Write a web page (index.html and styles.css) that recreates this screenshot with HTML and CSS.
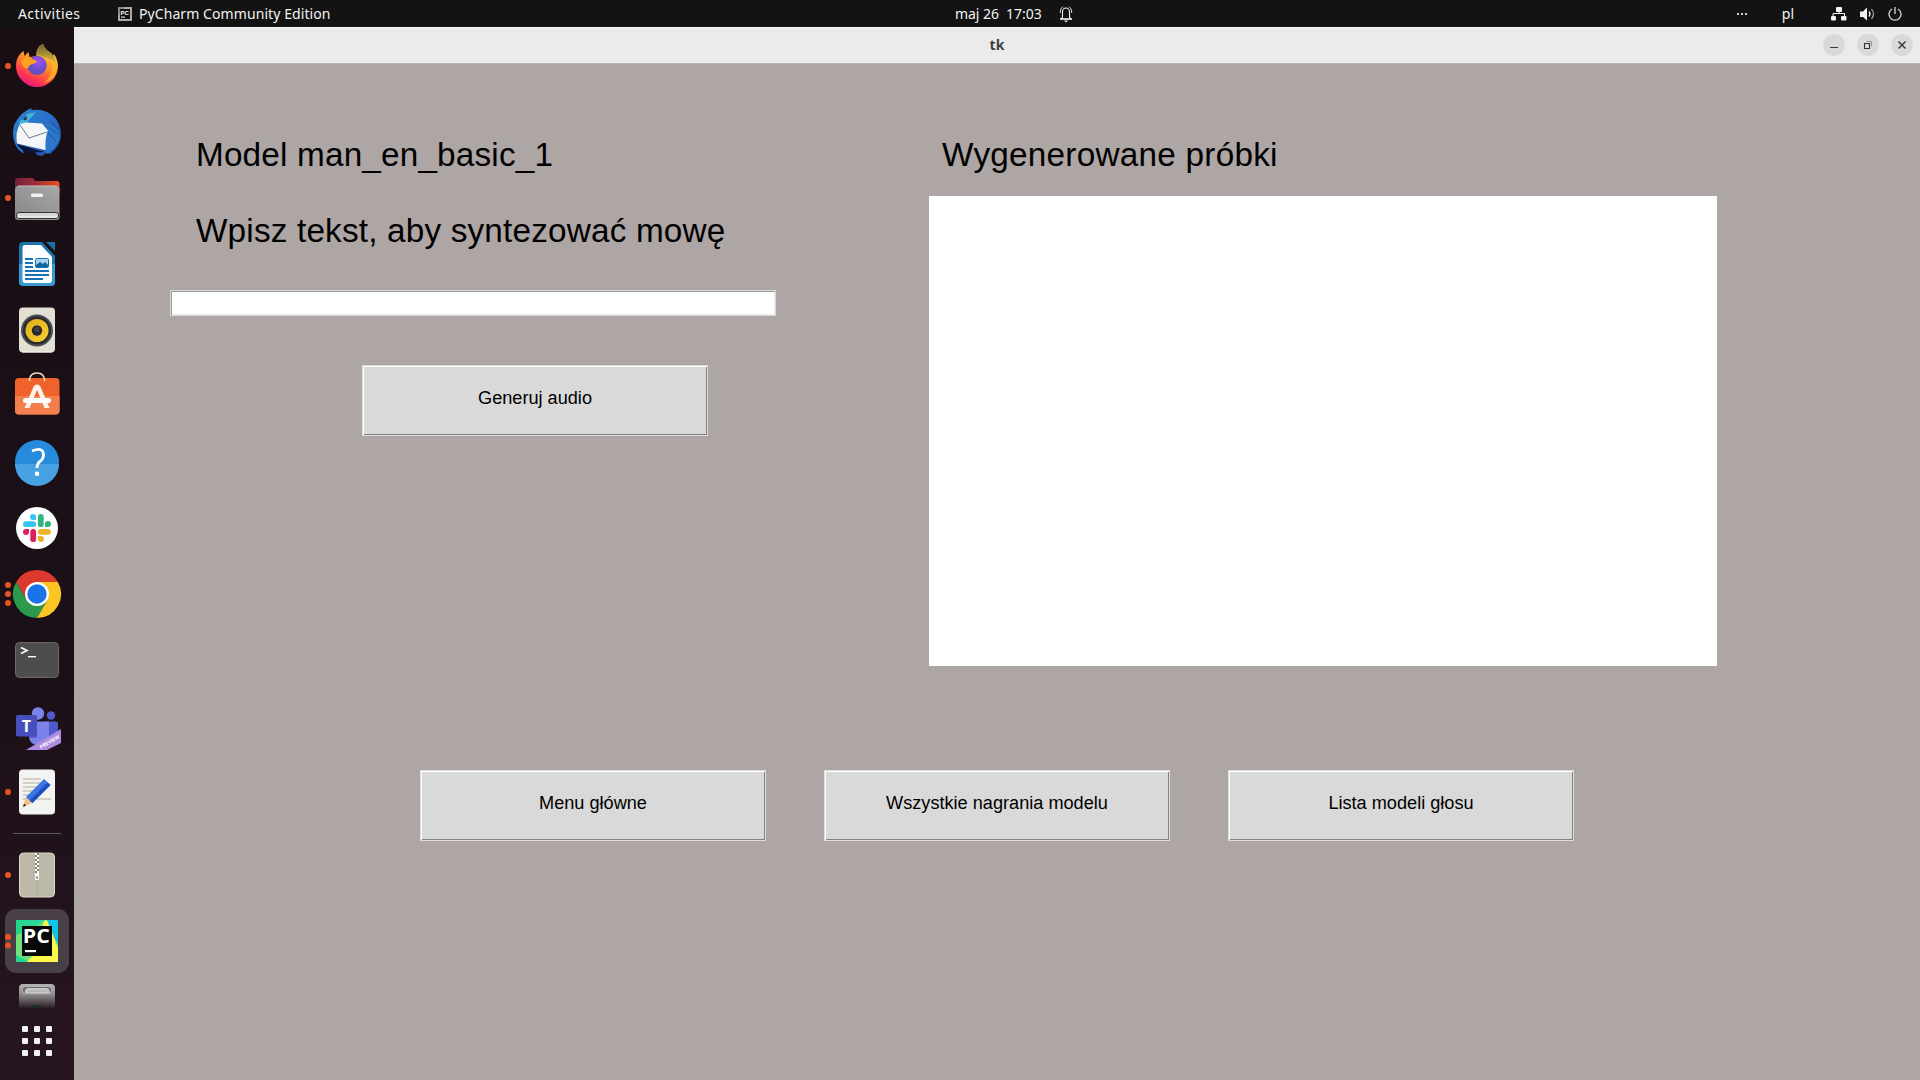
FILE: index.html
```html
<!DOCTYPE html>
<html lang="pl">
<head>
<meta charset="utf-8">
<title>tk</title>
<link rel="stylesheet" href="styles.css">
</head>
<body>
<div class="desktop">
  <header class="topbar">
    <div class="top-left">
      <span class="activities">Activities</span>
      <svg class="app-icon" width="14" height="14" viewBox="0 0 14 14"><path d="M0 0h14v14H0z" fill="#aaa"/><path d="M0 0h7L0 9z" fill="#888"/><path d="M2 2h10v10H2z" fill="#111"/><text x="2.6" y="7.6" class="pc-mini">PC</text><path d="M3 9.6h4v1H3z" fill="#fff"/></svg>
      <span class="app-name">PyCharm Community Edition</span>
    </div>
    <div class="top-center">
      <span class="clock">maj 26&nbsp; 17:03</span>
      <svg class="bell" width="14" height="18" viewBox="0 0 14 18" fill="none" stroke="#f2f2f2"><path d="M3.5 12V7a3.5 4 0 0 1 7 0v5l1.6 2H1.9z" stroke-width="1.1"/><path d="M1 14h12" stroke-width="1.3"/><path d="M5 15.5h4l-2 2z" fill="#f2f2f2" stroke="none"/><path d="M1.2 8Q1.2 3 4 1.6M12.8 8Q12.8 3 10 1.6" stroke-width=".9"/></svg>
    </div>
    <div class="top-right">
      <svg width="12" height="4" viewBox="0 0 12 4" fill="#cfcfcf"><path d="M1 1h2v2H1zM5 1h2v2H5zM9 1h2v2H9z"/></svg>
      <span class="lang">pl</span>
      <svg class="net" width="16" height="14" viewBox="0 0 16 14" fill="#f2f2f2"><rect x="5" y="0" width="6" height="5" rx="1"/><rect x="0" y="9" width="5" height="4.5" rx="1"/><rect x="10" y="9" width="5.5" height="4.5" rx="1"/><path d="M2 9V6.5h11.500V9M8 4v3" fill="none" stroke="#f2f2f2"/></svg>
      <svg class="vol" width="15" height="14" viewBox="0 0 15 14"><path d="M0 4.500h3L7 .5v13L3 10H0z" fill="#f2f2f2"/><path d="M9 4.500q2 2.500 0 5" fill="none" stroke="#f2f2f2" stroke-width="1.300"/><path d="M11.500 2q4 5 0 10" fill="none" stroke="#aaa" stroke-width="1.200"/></svg>
      <svg class="power" width="14" height="14" viewBox="0 0 14 14" fill="none" stroke="#d8d8d8" stroke-width="1.300"><path d="M4 2a6 6 0 1 0 6 0M7 0v7"/></svg>
    </div>
  </header>

  <nav class="dock">
    <svg class="dock-item" viewBox="0 0 74 66">
      <defs>
        <linearGradient id="fx" x1=".8" y1="0" x2=".3" y2="1"><stop offset="0" stop-color="#ffe23f"/><stop offset=".45" stop-color="#ff9422"/><stop offset=".8" stop-color="#ff3750"/><stop offset="1" stop-color="#e5128b"/></linearGradient>
        <linearGradient id="fxt" x1="0" y1="0" x2="0" y2="1"><stop offset="0" stop-color="#6b6134"/><stop offset="1" stop-color="#e8bd3c"/></linearGradient>
        <radialGradient id="fxg" cx=".6" cy=".3"><stop offset="0" stop-color="#a24cf5"/><stop offset="1" stop-color="#6350c4"/></radialGradient>
      </defs>
      <circle cx="8" cy="33" r="3" class="dot"/>
      <path d="M16 33C16 26 19 21 23.500 18l1 5 4-4 1 5q3 0 7-1.500Q36 14 43 11q2 6 8 9l2 3 1-2q4 6 4 12a21 21 0 0 1-42 0z" fill="url(#fx)"/>
      <path d="M36.500 22Q36 14 43 11q2 6 8 9 5 5 5 11-10-8-19.500-9z" fill="url(#fxt)"/>
      <circle cx="37" cy="32.500" r="9.700" fill="url(#fxg)"/>
      <path d="M21 28q5-4 9-3l7 3q-1 2.500-5 3-3 1-4 4-5 2-7-7z" fill="#ffa01f"/>
      <path d="M44 24q10 3 8 14-2 8-9 12 12-2 14-15-2-9-13-11z" fill="#ffb52e" opacity=".8"/>
    </svg>
    <svg class="dock-item" viewBox="0 0 74 66">
      <defs><linearGradient id="tb" x1="0" y1="0" x2="1" y2="1"><stop offset="0" stop-color="#2e83cc"/><stop offset=".5" stop-color="#2a71c9"/><stop offset="1" stop-color="#1f459c"/></linearGradient></defs>
      <path d="M14 26q7-14 18-17l-1 2q16-2 25 9 7 10 4 22-3 8-8 11l-1 2-5-1-4 3-5-1-2-3-12-3q0 4 2 5-12-5-12-22z" fill="url(#tb)"/>
      <path d="M19 22q5-1 8-7l9-2-8 9-7 7z" fill="#48b3d9"/>
      <path d="M17 45l27 8-18 1-8-7z" fill="#0d1236"/>
      <path d="M20 25l6-1.500 16 1 6 7-1 20-30-7q-2-11 3-19.500z" fill="#f4f5f7"/>
      <path d="M20 26l9 13 18-6" fill="none" stroke="#777c84" stroke-width="1"/>
      <path d="M38 24q8-1 10 7-4 10-2 24 9-3 14-16 1-15-22-15z" fill="#2b78cb"/>
      <path d="M51 22l7 9M49 28l10 8M48 34l8 8" stroke="#1e4fa8" fill="none"/>
      <path d="M23 20q4 4 4-3z" fill="#183765"/>
    </svg>
    <svg class="dock-item" viewBox="0 0 74 66">
      <defs><linearGradient id="fo" x1="0" x2="1"><stop offset="0" stop-color="#6f2140"/><stop offset=".5" stop-color="#a62f36"/><stop offset="1" stop-color="#e95420"/></linearGradient><linearGradient id="fg" x1="0" y1="1" x2="1" y2="0"><stop offset="0" stop-color="#858585"/><stop offset="1" stop-color="#a8a8a8"/></linearGradient></defs>
      <circle cx="8" cy="33" r="3" class="dot"/>
      <path d="M15 28V16q0-3 3-3h14q1.500 0 3 3h22q2.500 0 2.500 3v9z" fill="url(#fo)"/>
      <path d="M15 25q0-4 3-4h38.500q3 0 3 4v27q0 3-3 3H18q-3 0-3-3z" fill="url(#fg)"/>
      <path d="M18 21h38.500" stroke="#c4c4c4" fill="none"/>
      <rect x="31" y="28.500" width="12" height="3.500" rx="1.500" fill="#f2f2f2"/>
      <rect x="16.500" y="47.500" width="42" height="6" rx="2.500" fill="#d6d6d6" stroke="#333"/><path d="M18 52h39" stroke="#f7f7f7"/>
    </svg>
    <svg class="dock-item" viewBox="0 0 74 66">
      <path d="M23 11h19l13 14v26q0 4-4 4H23q-4 0-4-4V15q0-4 4-4z" fill="#1a76ad"/>
      <path d="M19 33h36v18q0 4-4 4H23q-4 0-4-4z" fill="#3899d0"/>
      <path d="M46 11h9v9z" fill="#1a6fa4"/>
      <path d="M25 14h16l11 12v23q0 3-3 3H25q-2.500 0-2.500-3V17q0-3 2.500-3z" fill="#fbfdff"/>
      <path d="M25 28h8M25 32h8M25 36h8M25 40h24M25 44h24M25 48h18" stroke="#1673b1" stroke-width="2"/>
      <rect x="35.500" y="27.500" width="13" height="9" rx="1" fill="#a5d3ef" stroke="#1673b1"/><path d="M36 36v-2l4-3 3 2 2-2 3 3v2z" fill="#0b659e"/>
    </svg>
    <svg class="dock-item" viewBox="0 0 74 66">
      <defs><linearGradient id="sp" x1="0" y1="0" x2="1" y2="1"><stop offset="0" stop-color="#dfae18"/><stop offset="1" stop-color="#f8cf35"/></linearGradient></defs>
      <rect x="19" y="10.500" width="36" height="45" rx="4" fill="#e2dfd3"/><path d="M22 55h30" stroke="#f6f4ed"/>
      <circle cx="37" cy="33.500" r="16" fill="#4b4d53"/><circle cx="37" cy="33.500" r="14" fill="#292b31"/><circle cx="37" cy="33.500" r="11.500" fill="url(#sp)"/><circle cx="37" cy="33.500" r="5.200" fill="#292929"/><circle cx="37" cy="32.500" r="2.500" fill="#444"/>
    </svg>
    <svg class="dock-item" viewBox="0 0 74 66">
      <path d="M29.500 18q0-8 7.500-8t7.500 8" fill="none" stroke="#f5d9ae" stroke-width="1.600"/>
      <rect x="15" y="15" width="44.500" height="36.500" rx="4" fill="#f0622b"/><path d="M15 33h44.500v14.500q0 4-4 4H19q-4 0-4-4z" fill="#f37f4f"/>
      <path d="M29.500 15v3M44.500 15v3" stroke="#f5d9ae" stroke-width="1.600"/>
      <path d="M24.500 45l8.500-20q1-3.500 4-3.500t4 3.500l8.500 20h-5L37 27l-7.500 18z" fill="#fff3ea"/><rect x="23" y="35" width="28" height="5" rx="2.500" fill="#fff"/>
    </svg>
    <svg class="dock-item" viewBox="0 0 74 66">
      <circle cx="37" cy="33" r="22" fill="#258bda"/><path d="M15 35a22 22 0 0 0 44 0z" fill="#47a2e4"/>
      <path d="M32 22Q43.500 17.500 43.500 26q0 3.500-3 6-3.500 2.500-3.500 7" fill="none" stroke="#fff" stroke-width="2.800"/><circle cx="37" cy="44.700" r="2.300" fill="#fff"/>
    </svg>
    <svg class="dock-item" viewBox="0 0 74 66">
      <circle cx="37" cy="33" r="21" fill="#fff"/>
      <path d="M26 29.200h7.200" stroke="#36c5f0" stroke-width="5.800" stroke-linecap="round"/><path d="M36 25h-3a3 3 0 1 1 3-3z" fill="#36c5f0"/>
      <path d="M40.800 22v7.200" stroke="#2eb67d" stroke-width="5.800" stroke-linecap="round"/><path d="M45 32v-3a3 3 0 1 1 3 3z" fill="#2eb67d"/>
      <path d="M33.200 37v7.200" stroke="#e01e5a" stroke-width="5.800" stroke-linecap="round"/><path d="M29 34v3a3 3 0 1 1-3-3z" fill="#e01e5a"/>
      <path d="M40.800 36.800H48" stroke="#ecb22e" stroke-width="5.800" stroke-linecap="round"/><path d="M38 41h3a3 3 0 1 1-3 3z" fill="#ecb22e"/>
    </svg>
    <svg class="dock-item" viewBox="0 0 74 66">
      <circle cx="8" cy="24" r="3" class="dot"/><circle cx="8" cy="33" r="3" class="dot"/><circle cx="8" cy="42" r="3" class="dot"/>
      <path d="M16.200 21a24 24 0 0 1 41.600 0H37L26.600 39z" fill="#dd3a2e"/>
      <path d="M16.200 21A24 24 0 0 0 37 57l10.400-18H26.600z" fill="#2b9a4c"/>
      <path d="M57.800 21A24 24 0 0 1 37 57l10.400-18L37 21z" fill="#fcc622"/>
      <circle cx="37" cy="33" r="12" fill="#fff"/><circle cx="37" cy="33" r="9.700" fill="#1a73e8"/>
    </svg>
    <svg class="dock-item" viewBox="0 0 74 66">
      <rect x="15.500" y="15.500" width="43" height="35" rx="4" fill="#4d4d4d" stroke="#696969"/>
      <path d="M21 20.500l6 3-6 3" fill="none" stroke="#fff" stroke-width="1.600"/><path d="M28 29.700h8" stroke="#fff" stroke-width="1.400"/>
    </svg>
    <svg class="dock-item" viewBox="0 0 74 66">
      <circle cx="38" cy="20.500" r="6.200" fill="#7b83eb"/><circle cx="51" cy="22.500" r="4.200" fill="#5059c9"/>
      <path d="M46 28.500h10q2 0 2 2V41q0 7-8 7h-4z" fill="#5059c9"/>
      <path d="M29 28.500h20V43q0 9-10 9t-10-9z" fill="#7b83eb"/>
      <path d="M29 30h8v15h-7z" fill="#5861cc"/>
      <rect x="16" y="22" width="21" height="21.500" rx="2" fill="#464fbb"/><text x="26.500" y="39" text-anchor="middle" class="teams-t">T</text>
      <path d="M26 57l35-21v14l-14 7z" fill="#ae8be0"/><text x="0" y="0" transform="translate(41 56) rotate(-31)" class="preview" textLength="22">PREVIEW</text>
    </svg>
    <svg class="dock-item" viewBox="0 0 74 66">
      <circle cx="8" cy="33" r="3" class="dot"/>
      <rect x="19" y="10.500" width="36" height="45" rx="4" fill="#f3f3f2"/>
      <path d="M23 20h18M23 24h18M23 28h15M23 32h13M23 36h9M23 40h28" stroke="#c9c5b8" stroke-width="1.700"/>
      <path d="M23 48l3-10 6 6z" fill="#f4bd84"/><path d="M23 48l1-3.500 2.300 2z" fill="#333"/>
      <path d="M26 38l18-18 6.500 6-18 18z" fill="#3d74e4"/><path d="M29.500 41.500l18-18 3 2.500-18 18z" fill="#1d50bd"/>
    </svg>
    <div class="separator"></div>
    <svg class="dock-item" viewBox="0 0 74 66">
      <circle cx="8" cy="33" r="3" class="dot"/>
      <rect x="19.500" y="11" width="35" height="44" rx="4" fill="#bdb9a9" stroke="#dad7ca"/><path d="M37 38v17" stroke="#b2ae9f"/>
      <path d="M35 11h4v21h-4z" fill="#837f73"/><path d="M36 11v21" stroke="#fff" stroke-width="2" stroke-dasharray="2 2"/><path d="M38 13v19" stroke="#fff" stroke-width="2" stroke-dasharray="2 2"/>
      <path d="M35 31h4v7h-4z" fill="#f7f7f4"/><path d="M36.200 34.500h1.600v2h-1.600z" fill="#666"/>
    </svg>
    <svg class="dock-item" viewBox="0 0 74 66">
      <defs><linearGradient id="py" x1="0" y1="0" x2="1" y2="0"><stop offset="0" stop-color="#21d789"/><stop offset=".6" stop-color="#32d6a0"/><stop offset="1" stop-color="#07c3f2"/></linearGradient></defs>
      <rect x="5" y="1" width="64" height="64" rx="11" fill="#494047"/>
      <circle cx="8" cy="29" r="3" class="dot"/><circle cx="8" cy="37.500" r="3" class="dot"/>
      <path d="M16 12h42v42H16z" fill="url(#py)"/><path d="M36 19l9-7h2l11 25v17H30L16 47V27z" fill="#70e27c"/><path d="M44 13l3-1 11 28v14H27l9-10z" fill="#fcf84a"/><path d="M47 12h11v24z" fill="#0fc4e7"/>
      <path d="M22 18h30v30H22z" fill="#080808"/><text x="22.800" y="35" class="pc" textLength="27" lengthAdjust="spacingAndGlyphs">PC</text><path d="M25 42h11v2.200H25z" fill="#fff"/>
    </svg>
    <svg class="trash" viewBox="0 0 74 34">
      <defs><linearGradient id="tr" x1="0" y1="0" x2="0" y2="1"><stop offset="0" stop-color="#b3b1b3"/><stop offset=".45" stop-color="#8a888a"/><stop offset="1" stop-color="#2b1c26"/></linearGradient></defs>
      <path d="M19 34V14q0-4 4-4h28q4 0 4 4v20z" fill="url(#tr)"/>
      <rect x="22.500" y="12.500" width="29" height="7" rx="3" fill="#69666a" stroke="#d0ced0" stroke-width=".7"/><path d="M25 19v-3l2-2h20l2 1 1 4z" fill="#c7c6c7"/><path d="M27 17h20" stroke="#a8a6a8"/>
      <path d="M31 34l2-3h3l1 1 2-1h2l2 3z" fill="#1d2c20"/>
    </svg>
    <svg class="dock-item" viewBox="0 0 74 66" fill="#f2f2f2">
      <rect x="22" y="18" width="6" height="6" rx="1"/><rect x="34" y="18" width="6" height="6" rx="1"/><rect x="46" y="18" width="6" height="6" rx="1"/>
      <rect x="22" y="30" width="6" height="6" rx="1"/><rect x="34" y="30" width="6" height="6" rx="1"/><rect x="46" y="30" width="6" height="6" rx="1"/>
      <rect x="22" y="42" width="6" height="6" rx="1"/><rect x="34" y="42" width="6" height="6" rx="1"/><rect x="46" y="42" width="6" height="6" rx="1"/>
    </svg>
  </nav>

  <section class="window">
    <div class="titlebar">
      <span class="title">tk</span>
      <div class="controls">
        <span class="control"><svg width="10" height="10" viewBox="0 0 10 10"><path d="M1 7.500h8" stroke="#3a3a3a"/></svg></span>
        <span class="control"><svg width="10" height="10" viewBox="0 0 10 10" fill="none"><path d="M3.500 1.500h5v5" stroke="#999"/><path d="M1.500 3.500h5v5h-5z" stroke="#333" stroke-width="1.100"/></svg></span>
        <span class="control"><svg width="10" height="10" viewBox="0 0 10 10"><path d="M1.500 1.500l7 7M8.500 1.500l-7 7" stroke="#3a3a3a" stroke-width="1.500"/></svg></span>
      </div>
    </div>
    <main class="content">
      <div class="columns">
        <div class="form">
          <h1 class="label">Model man_en_basic_1</h1>
          <label class="label prompt" for="entry">Wpisz tekst, aby syntezować mowę</label>
          <input class="entry" id="entry" type="text">
          <button class="button generate">Generuj audio</button>
        </div>
        <div class="samples">
          <h2 class="label">Wygenerowane próbki</h2>
          <div class="listbox"></div>
        </div>
      </div>
      <div class="actions">
        <button class="button">Menu główne</button>
        <button class="button">Wszystkie nagrania modelu</button>
        <button class="button">Lista modeli głosu</button>
      </div>
    </main>
  </section>
</div>
</body>
</html>
```
FILE: styles.css
```css
* { box-sizing: border-box; }
body { margin: 0; overflow: hidden; font-family: "Liberation Sans", sans-serif; }
svg { display: block; flex: none; }

.desktop {
  display: grid;
  grid-template: 27px 1053px / 74px 1846px;
  width: 1920px;
  height: 1080px;
}

.topbar {
  grid-column: 1 / 3;
  display: grid;
  grid-template-columns: 955px auto 1fr;
  align-items: center;
  background: #131313;
  color: #f2f2f2;
  font: 14px/26px "Noto Sans", sans-serif;
  white-space: pre;
}
.top-left { display: flex; align-items: center; padding-left: 18px; }
.activities { width: 100px; letter-spacing: 0.4px; }
.app-name { margin-left: 7px; letter-spacing: 0.08px; }
.top-center { display: flex; align-items: center; }
.clock { width: 104px; letter-spacing: -0.05px; }
.top-right { display: flex; align-items: center; justify-content: flex-end; padding-right: 18px; }
.lang { margin: 0 37px 0 34px; }
.vol { margin: 0 13px 0 13px; }

.dock {
  display: flex;
  flex-direction: column;
  padding-top: 6px;
  overflow: hidden;
  background: linear-gradient(#190e14, #1b1017 60%, #27151f);
}
.dock-item { width: 74px; height: 66px; }
.trash { width: 74px; height: 34px; }
.separator { flex: none; width: 48px; height: 1px; margin: 8px 13px; background: #5f575c; }
.dot { fill: #e95420; }
.teams-t { font: bold 16px "Open Sans", sans-serif; fill: #fff; }
.preview { font: bold 5px "Open Sans", sans-serif; fill: #fff; }
.pc { font: bold 19px "Open Sans", sans-serif; fill: #fff; }
.pc-mini { font: bold 6px "Liberation Sans", sans-serif; fill: #fff; }

.window { display: flex; flex-direction: column; background: #aea5a5; }
.titlebar {
  display: grid;
  grid-template-columns: 1fr auto 1fr;
  align-items: center;
  height: 37px;
  padding-bottom: 1px;
  background: #ebebeb;
  border-top: 1px solid #f8f8f8;
  border-bottom: 1px solid #b9b4b4;
}
.title { grid-column: 2; color: #3d3d3d; font: bold 14px/34px "Noto Sans", sans-serif; }
.controls { display: flex; justify-content: flex-end; gap: 12px; padding-right: 7px; }
.control {
  display: flex;
  align-items: center;
  justify-content: center;
  width: 22px;
  height: 22px;
  border-radius: 50%;
  background: #d9d9d9;
}

.content { padding-top: 71px; color: #000; }
.columns { display: flex; gap: 153px; padding-left: 96px; }
.form { display: flex; flex-direction: column; width: 606px; }
.label {
  margin: 0;
  padding-left: 26px;
  font-size: 33.3px;
  font-weight: 400;
  line-height: 40px;
  letter-spacing: 0.18px;
  white-space: nowrap;
}
.prompt { margin-top: 36px; }
.entry {
  height: 26px;
  margin: 39px 0 49px;
  padding: 0 4px;
  border: 1px solid #d9d9d9;
  border-radius: 0;
  background: #fff;
  box-shadow: inset 1px 1px #9a9a9a, inset -1px -1px #ececec;
}
.button {
  width: 346px;
  height: 71px;
  padding: 0 0 5px;
  border: 1px solid #dedcdc;
  border-radius: 0;
  background: #d9d9d9;
  box-shadow: inset 1px 1px #fff, inset -1px -1px #828282;
  color: #000;
  font: 18.15px "Liberation Sans", sans-serif;
}
.generate { margin-left: 192px; }
.samples .label { padding-left: 13px; letter-spacing: 0.25px; }
.listbox { width: 788px; height: 470px; margin-top: 21px; background: #fff; }
.actions { display: flex; gap: 58px; padding: 104px 0 0 346px; }
```
